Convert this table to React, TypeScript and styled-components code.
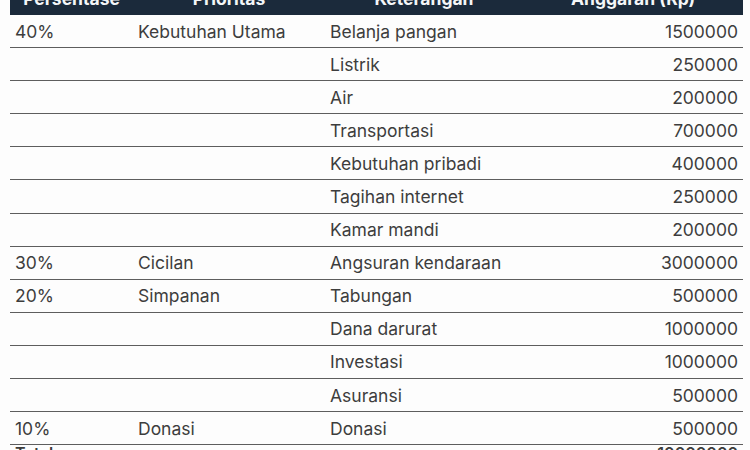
import React from "react";
import styled, { createGlobalStyle } from "styled-components";

const Global = createGlobalStyle`
  html, body { margin: 0; padding: 0; background: #fdfdfd; overflow: hidden; }
  body { font-family: Inter, "Open Sans", sans-serif; }
`;

const Page = styled.div`
  padding: 0 7px 0 10px;
  margin-top: -18px;
`;

const Table = styled.table`
  width: 733px;
  border-collapse: collapse;
  table-layout: fixed;
  font-family: Inter, "Open Sans", sans-serif;
  font-size: 17.5px;
  color: #3d3d3d;
`;

const HeadCell = styled.th`
  box-sizing: border-box;
  height: 33px;
  padding: 0 5px;
  background: #1b2a3b;
  color: #f4f6f8;
  font-weight: 700;
  text-align: center;
  vertical-align: middle;
  white-space: nowrap;
`;

const Row = styled.tr`
  border-bottom: 1.5px solid #5e5e5e;
`;

const Cell = styled.td<{ $right?: boolean }>`
  height: 32.1px;
  padding: 0 5px;
  text-align: ${(p) => (p.$right ? "right" : "left")};
  vertical-align: middle;
  white-space: nowrap;
`;

const TotalCell = styled.td<{ $right?: boolean }>`
  padding: 0 5px;
  line-height: 1;
  text-align: ${(p) => (p.$right ? "right" : "left")};
  vertical-align: top;
  font-weight: 600;
  font-size: 16px;
  height: 30px;
`;

type Item = { pct?: string; prio?: string; desc: string; amount: number };

const items: Item[] = [
  { pct: "40%", prio: "Kebutuhan Utama", desc: "Belanja pangan", amount: 1500000 },
  { desc: "Listrik", amount: 250000 },
  { desc: "Air", amount: 200000 },
  { desc: "Transportasi", amount: 700000 },
  { desc: "Kebutuhan pribadi", amount: 400000 },
  { desc: "Tagihan internet", amount: 250000 },
  { desc: "Kamar mandi", amount: 200000 },
  { pct: "30%", prio: "Cicilan", desc: "Angsuran kendaraan", amount: 3000000 },
  { pct: "20%", prio: "Simpanan", desc: "Tabungan", amount: 500000 },
  { desc: "Dana darurat", amount: 1000000 },
  { desc: "Investasi", amount: 1000000 },
  { desc: "Asuransi", amount: 500000 },
  { pct: "10%", prio: "Donasi", desc: "Donasi", amount: 500000 },
];

const widths = [123, 192, 198, 220];

export default function App() {
  const total = items.reduce((s, i) => s + i.amount, 0);
  return (
    <Page>
      <Global />
      <Table>
        <colgroup>
          {widths.map((w, i) => (
            <col key={i} style={{ width: w }} />
          ))}
        </colgroup>
        <thead>
          <tr>
            <HeadCell>Persentase</HeadCell>
            <HeadCell>Prioritas</HeadCell>
            <HeadCell>Keterangan</HeadCell>
            <HeadCell>Anggaran (Rp)</HeadCell>
          </tr>
        </thead>
        <tbody>
          {items.map((it, i) => (
            <Row key={i}>
              <Cell>{it.pct ?? ""}</Cell>
              <Cell>{it.prio ?? ""}</Cell>
              <Cell>{it.desc}</Cell>
              <Cell $right>{it.amount}</Cell>
            </Row>
          ))}
          <tr>
            <TotalCell>Total</TotalCell>
            <TotalCell />
            <TotalCell />
            <TotalCell $right>{total}</TotalCell>
          </tr>
        </tbody>
      </Table>
    </Page>
  );
}
